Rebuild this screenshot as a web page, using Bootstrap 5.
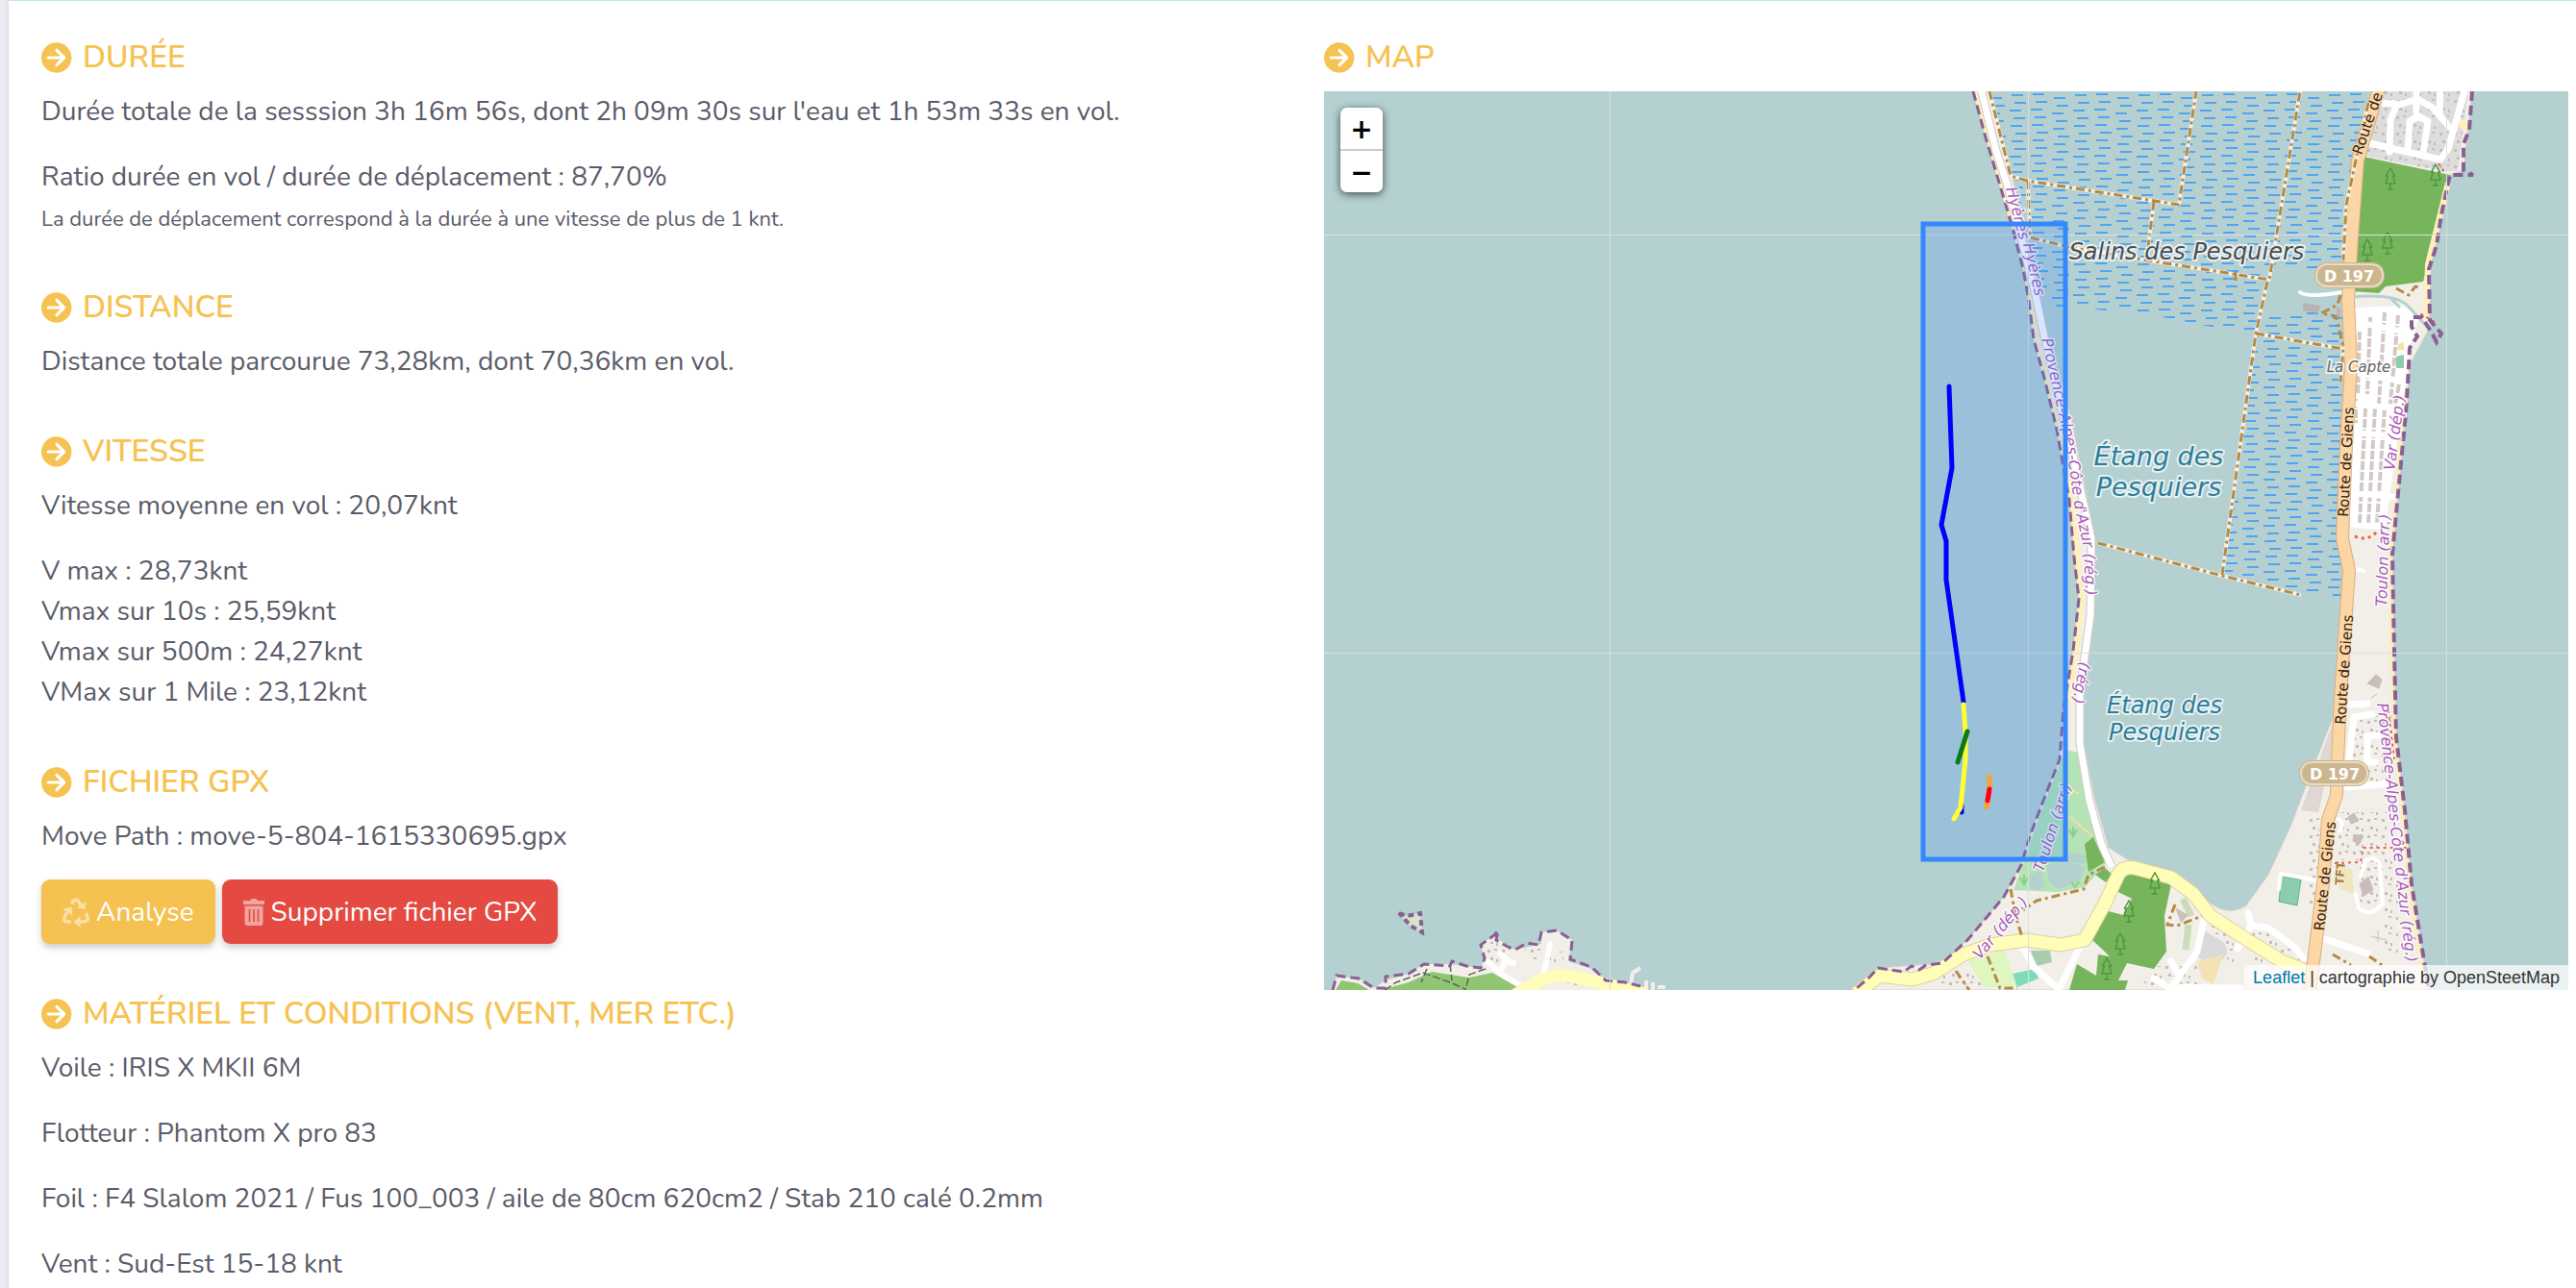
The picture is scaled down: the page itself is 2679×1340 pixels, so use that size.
<!DOCTYPE html>
<html lang="fr">
<head>
<meta charset="utf-8">
<meta name="viewport" content="width=device-width, initial-scale=1">
<title>Session</title>
<link href="https://cdn.jsdelivr.net/npm/bootstrap@5.3.0/dist/css/bootstrap.min.css" rel="stylesheet">
<style>
  body { font-family: Nunito, Lato, "Open Sans", sans-serif; font-size: 28px; line-height: 42px; color: #5a5c69; background: #ecedf2; overflow-x: hidden; }
  .session-panel { margin-left: 9px; padding: 39px 8px 0 34px; border-top: 1px solid #c3e9eb; background: #fff; box-shadow: 0 0 5px rgba(58,59,69,.2); min-height: 100vh; overflow: hidden; }
  .session-row { --bs-gutter-x: 40px; }
  .session-panel h2 { display: flex; align-items: center; gap: 11px; font-size: 32px; line-height: 40px; font-weight: 600; color: #f6c251; margin: 0 0 15px; text-transform: uppercase; }
  .session-panel h2 svg { width: 32px; height: 32px; flex: none; }
  .session-panel section { margin-bottom: 53px; }
  .session-panel p { margin-bottom: 26px; }
  .session-panel .file-path { margin-bottom: 24px; }
  .session-panel p:last-child { margin-bottom: 0; }
  .note { font-size: 22px; line-height: 22px; }
  .action-row { gap: 7px; }
  .action { --bs-btn-color: #fff; --bs-btn-hover-color: #fff; --bs-btn-font-size: 28px; --bs-btn-line-height: 42px; --bs-btn-padding-x: 22px; --bs-btn-padding-y: 12px; --bs-btn-border-radius: 9px; --bs-btn-border-width: 0; height: 67px; gap: 7px; box-shadow: 0 4px 7px rgba(0,0,0,.2); }
  .action svg { height: 32px; opacity: .5; flex: none; }
  .action-analyse { --bs-btn-bg: #f5c251; --bs-btn-hover-bg: #e9b541; }
  .action-delete { --bs-btn-bg: #e44a42; --bs-btn-hover-bg: #d33d35; }
  .map-frame { position: relative; background: #b5d0d0; font-family: "Liberation Sans", Arial, sans-serif; }
  .map-frame > svg { display: block; width: 100%; height: auto; }
  .map-zoom { position: absolute; top: 17px; left: 17px; width: 44px; border-radius: 7px; box-shadow: 0 2px 8px rgba(0,0,0,.65); overflow: hidden; }
  .map-zoom button { width: 44px; height: 43px; border: 0; background: #fff; color: #000; font: bold 28px/45px "DejaVu Sans", sans-serif; padding: 0; display: block; }
  .map-zoom button + button { border-top: 2px solid #ccc; height: 45px; }
  .map-credit { position: absolute; right: 0; bottom: 0; background: rgba(255,255,255,.7); color: #333; font-size: 18px; line-height: 26px; padding: 0 9px; }
  .map-credit a { color: #0078a8; text-decoration: none; }
  .lbl { font-family: "DejaVu Sans", sans-serif; paint-order: stroke; stroke: rgba(255,255,255,.7); stroke-width: 4px; stroke-linejoin: round; }
  .water { fill: #2b7e9c; font-style: italic; text-anchor: middle; }
  .admin { fill: #a95bbb; font-style: italic; font-size: 16px; stroke-width: 3px; }
  .street { fill: #2e2418; font-size: 15px; stroke: #fcd6a4; stroke-width: 2px; text-anchor: middle; }
</style>
<script src="https://cdn.jsdelivr.net/npm/bootstrap@5.3.0/dist/js/bootstrap.bundle.min.js"></script>
</head>
<body>
<svg width="0" height="0" class="position-absolute" aria-hidden="true">
  <symbol id="arrow" viewBox="0 0 32 32"><circle cx="15.700" cy="16" r="15.700" fill="#f6c251"/><path d="M7.300 16H23.500M16 8.300L23.700 16l-7.700 7.700" fill="none" stroke="#fff" stroke-width="3.200" stroke-linecap="round" stroke-linejoin="round"/></symbol>
</svg>
<main class="session-panel">
  <div class="row session-row">
    <div class="col-6">
      <section>
        <h2><svg aria-hidden="true"><use href="#arrow"/></svg>Durée</h2>
        <p>Durée totale de la sesssion 3h 16m 56s, dont 2h 09m 30s sur l'eau et 1h 53m 33s en vol.</p>
        <p>Ratio durée en vol / durée de déplacement : 87,70%<br><span class="note">La durée de déplacement correspond à la durée à une vitesse de plus de 1 knt.</span></p>
      </section>
      <section>
        <h2><svg aria-hidden="true"><use href="#arrow"/></svg>Distance</h2>
        <p>Distance totale parcourue 73,28km, dont 70,36km en vol.</p>
      </section>
      <section>
        <h2><svg aria-hidden="true"><use href="#arrow"/></svg>Vitesse</h2>
        <p>Vitesse moyenne en vol : 20,07knt</p>
        <p>V max : 28,73knt<br>Vmax sur 10s : 25,59knt<br>Vmax sur 500m : 24,27knt<br>VMax sur 1 Mile : 23,12knt</p>
      </section>
      <section>
        <h2><svg aria-hidden="true"><use href="#arrow"/></svg>Fichier GPX</h2>
        <p class="file-path">Move Path : move-5-804-1615330695.gpx</p>
        <div class="d-flex action-row">
          <button type="button" class="btn action action-analyse d-flex align-items-center">
            <svg viewBox="0 0 28 32" width="28" fill="none" stroke="#fff" stroke-width="3.400" aria-hidden="true"><path d="M9.500 7.500C12 2 15.500 2 18 7l2 3.500"/><path d="M15 11.500l8.500 1.500.7-8z" fill="#fff" stroke="none"/><path d="M24 17c4 6 3 9-3 9h-3"/><path d="M18.500 20v12L11.500 26z" fill="#fff" stroke="none"/><path d="M9 26H6c-5 0-5.500-3-2.500-7.500l2-3.500"/><path d="M0 12.500l9.500-2 .8 9z" fill="#fff" stroke="none"/></svg>Analyse</button>
          <button type="button" class="btn action action-delete d-flex align-items-center">
            <svg viewBox="0 0 22 32" width="22" aria-hidden="true"><path d="M0 4h7l1.500-2h5L15 4h7v4H0zM1.500 9.500h19V27q0 3-3 3h-13q-3 0-3-3z" fill="#fff"/><path d="M6.500 13v13M11 13v13M15.500 13v13" stroke="#e44a42" stroke-width="1.600"/></svg>Supprimer fichier GPX</button>
        </div>
      </section>
      <section>
        <h2><svg aria-hidden="true"><use href="#arrow"/></svg>Matériel et conditions (vent, mer etc.)</h2>
        <p>Voile : IRIS X MKII 6M</p>
        <p>Flotteur : Phantom X pro 83</p>
        <p>Foil : F4 Slalom 2021 / Fus 100_003 / aile de 80cm 620cm2 / Stab 210 calé 0.2mm</p>
        <p>Vent : Sud-Est 15-18 knt</p>
      </section>
    </div>
    <div class="col-6">
      <h2><svg aria-hidden="true"><use href="#arrow"/></svg>Map</h2>
      <div class="map-frame">
        <svg viewBox="1377 95 1294 935" role="img" aria-label="Carte de la session">
          <defs>
            <pattern id="marsh" width="66" height="48" patternUnits="userSpaceOnUse">
              <path d="M2 2h12M5 10h12M0 18h12M4 26h12M1 34h12M6 42h12M24 6h12M27 14h12M22 22h12M26 30h12M23 38h12M28 46h12M46 3h12M49 11h12M44 19h12M48 27h12M45 35h12M50 43h12" stroke="#4fa5f2" stroke-width="2"/>
            </pattern>
            <pattern id="houses" width="15" height="17" patternUnits="userSpaceOnUse">
              <path d="M2 2h3v3H2zM9 1h3v2H9zM5 10h3v3H5zM11 12h2v3h-2z" fill="#c9bcba"/>
            </pattern>
            <symbol id="tree" viewBox="0 0 12 24"><path d="M6 1L1.500 9h1.800L1 17h10L8.700 9h1.800zM6 17v6M3 23h6" fill="none" stroke="#4f9640" stroke-width="1.500"/></symbol>
            <path id="shoreW" d="M2052 95L2065 143L2080 193L2093 237L2104 280L2110 313L2115 353L2126 393L2139 447L2152 520L2157 580L2162 623L2156 677L2146 737L2142 790L2125 833L2111 870L2102 900L2084 933L2047 977L2020 1002L2003 1004L1996 1009L1988 1005L1980 1011L1953 1007L1943 1018L1927 1031"/>
            <path id="shoreE" d="M2571 95L2568 135L2562 150L2562 177L2572 182L2548 182L2539 223L2534 255L2526 280L2527 333L2539 347L2534 356L2530 348L2519 330L2508 330L2508 340L2514 350L2506 362L2504 400L2502 430L2494 513L2488 577L2490 677L2492 767L2501 843L2508 920L2526 1030"/>
            <path id="regW" d="M2123 353L2134 400L2149 465L2158 530L2167 570L2171 660"/>
            <path id="regE" d="M2472 732L2480 800L2486 860L2494 930L2509 1050"/>
          </defs>
          <rect x="1377" y="95" width="1294" height="935" fill="#b5d0d0"/>

          <!-- salt marsh -->
          <path d="M2069 95H2463L2445 180L2437 300L2436 380L2435 577L2434 622L2393 618L2311 598L2316 560L2344 347L2300 340L2240 328L2180 322L2130 318L2112 250L2093 186z" fill="url(#marsh)"/>
          <path d="M2366 275L2436 285V325L2400 322L2352 325z" fill="#b5d0d0"/>

          <!-- land -->
          <path d="M2052 95L2065 143L2080 193L2093 237L2104 280L2110 313L2115 353L2126 393L2139 447L2152 520L2157 580L2162 623L2156 677L2146 737L2142 790L2125 833L2111 870L2102 900L2084 933L2047 977L2020 1002L1953 1007L1927 1030H2526L2508 920L2501 843L2492 767L2490 677L2488 577L2494 513L2502 430L2506 380L2527 340L2526 280L2539 223L2548 182L2562 177L2571 95H2470L2450 167L2445 247L2441 313L2444 380L2438 463L2435 577L2440 637L2430 703L2426 747L2400 813L2382 860L2359 910L2336 942Q2325 950 2310 946L2299 940L2281 925L2258 908L2217 897L2193 882L2179 833L2167 773L2167 720L2178 640L2179 560L2155 440L2128 345L2108 250L2093 186L2069 95z" fill="#f2efe9" stroke="#d5d0c8"/>
          <path d="M2474 95L2459 162L2541 178L2556 178L2567 95z" fill="#dedddd"/>
          <path d="M2474 95L2459 162L2541 178L2556 178L2567 95z" fill="url(#houses)"/>
          <path d="M2458 163L2548 182L2539 223L2520 293L2481 298L2474 305L2447 303z" fill="#77b55c"/>
          <path d="M2055 95L2107 280L2118 353L2142 447L2155 520L2161 580L2165 623L2159 677L2149 737M2546 190L2525 275L2523 330" fill="none" stroke="#fdf0bd" stroke-width="6"/>
          <path d="M2558 124l10 2v10l-11-3z" fill="#fbeebf"/>
          <path d="M2500 410L2493 500L2486 577L2487 690L2490 767L2499 850L2506 930L2520 1020" fill="none" stroke="#fbeebf" stroke-width="4"/>
          <path d="M2426 752L2414 785L2393 843L2411 845L2424 790z" fill="#e0d6d3"/>
          <path d="M2398 850h14v95h-14zM2430 845h52v50h-52zM2454 895h24v50h-24zM2480 895h14v100h-14zM2340 960L2400 995V1004H2345zM2290 950L2325 970L2330 1004H2320z" fill="url(#houses)"/>
          <path d="M2448 745h42v68h-46zM2020 1010h75v20h-80zM2240 1005h45v25h-60z" fill="url(#houses)"/>
          <path d="M2292 968L2312 980Q2322 992 2308 1000Q2296 1006 2286 995z" fill="#dadada"/>
          <path d="M2285 1000L2312 993L2302 1024L2290 1018z" fill="#f2e2b4"/>
          <path d="M2432 900l14 4 2 26-16-6z" fill="#f2e6bd"/>

          <!-- wood and grass -->
          <path d="M2148 780L2162 783L2173 833L2189 882L2189 900L2168 923L2140 928L2094 926L2104 898L2125 838z" fill="#b5e3b5"/>
          <path d="M2111 910l12-4 4 14-6 6-10-2zM2128 900l18-3 22 4-4 14-22 10-10-6zM2145 890q12-6 24 0v8h-20z" fill="#b5d0d0"/>
          <path d="M2168 878L2177 871L2189 897L2172 907zM2179 910L2189 903L2196 909L2190 918z" fill="#77b55c"/>
          <path d="M2203 910L2217 908L2258 920L2251 953L2253 990L2240 1008L2212 1002L2203 1020H2213L2210 1030H2152L2160 1003L2180 1015L2182 993L2194 995L2175 977L2189 947L2208 952L2217 935L2201 927z" fill="#77b55c"/>
          <path d="M2047 1000L2084 988L2098 1027H2063z" fill="#dff6be"/>
          <path d="M2373 912L2393 915L2389 942L2370 938z" fill="#8bcdad" stroke="#6aae8c"/>
          <path d="M2093 1013L2117 1008L2120 1018L2098 1027z" fill="#7ddcb9"/>
          <path d="M2112 989h20l2 12-16 4z" fill="#a6cdb0"/>
          <path d="M2270 935L2279 953M2276 962L2273 988" stroke="#cbdcb8" stroke-width="7"/>
          <path d="M2152 820L2162 826M2152 850L2160 856L2176 870" fill="none" stroke="#f5dca8" stroke-width="2"/>
          <path d="M2262 944l14 8-8 8z" fill="#cabfbd"/>

          <!-- camp site -->
          <path d="M2449 320L2500 318L2515 332L2506 362L2503 390L2480 552L2443 548z" fill="#fff"/>
          <g fill="none" stroke="#d2c9c7" stroke-width="4" stroke-dasharray="9 2">
            <path d="M2454 345L2452 410M2450 415V440M2465 330L2462 410M2460 425L2454 545M2480 325L2474 420M2470 425L2463 545M2494 328L2486 420M2480 425L2472 545M2495 400L2490 425"/>
          </g>
          <path d="M2450 335l60 12M2450 388l54 10M2449 420l52 6M2447 450l50 4M2444 513l48 4" stroke="#fff" stroke-width="6"/>
          <path d="M2449 558q14 6 24-6" fill="none" stroke="#f25c54" stroke-width="3" stroke-dasharray="3 4"/>
          <path d="M2492 371l8-2v14h-8z" fill="#8bcdad"/>
          <path d="M2494 358l6-2v8h-7z" fill="#f2e2a8"/>
          <path d="M2395 315l18 3-2 8-16-3zM2430 318l4 4v8h-4z" fill="#b9b3b1"/>
          <path d="M2462 711l9-9 6 5-3 9zM2466 726l6-4M2442 850l6-4 5 8-8 3zM2448 868l10 2-4 8-7-3zM2454 920l9-8 5 14-10 6zM2466 974l16 4M2473 968v12" fill="#c9bcba" stroke="#c9bcba"/>

          <!-- minor roads -->
          <path d="M2060 92L2076 157L2089 197L2117 307L2126 350L2143 423L2155 470L2175 560L2174 640L2163 720L2163 773L2173 833L2185 877L2196 902" fill="none" stroke="#cfcac6" stroke-width="9"/>
          <path d="M2060 92L2076 157L2089 197L2117 307L2126 350L2143 423L2155 470L2175 560L2174 640L2163 720L2163 773L2173 833L2185 877L2196 902" fill="none" stroke="#fff" stroke-width="7"/>
          <g fill="none" stroke="#fff" stroke-width="7" stroke-linejoin="round" stroke-linecap="round">
            <path d="M2464 149L2538 166L2546 155L2563 95M2485 158L2486 125L2492 110L2514 103L2530 112L2547 132M2474 107L2492 108M2513 95V120L2525 126L2520 160M2514 122L2506 126L2504 158M2538 95L2537 118"/>
            <path d="M2392 304Q2400 310 2436 304" stroke-width="4"/>
            <path d="M2102 983L2116 1007L2139 1027M2164 983L2141 1030M2292 957L2285 990L2258 1027L2330 1028M2338 950L2341 963L2358 965L2386 985L2396 998M2341 963L2327 987M2418 977L2462 992M2240 1018L2260 1030M2258 1000L2264 1012"/>
            <path d="M2462 732L2444 733M2467 743L2448 746L2443 790M2474 765L2462 766V793H2470M2441 819L2487 815"/>
            <path d="M2455 912L2460 895Q2472 890 2475 900L2478 940Q2466 955 2453 945L2450 930M2370 925L2372 909L2410 916M2450 592l8 2M2432 852q6 4 2 12" stroke-width="4"/>
          </g>

          <!-- main roads -->
          <g fill="none" stroke-linejoin="round">
            <path d="M1930 1034L1955 1015L1988 1019L2010 1013L2042 993L2070 983L2107 978L2143 983L2168 978L2189 940L2203 910Q2208 901 2220 903L2258 913L2281 930L2299 953L2336 977L2373 1000L2398 1010" stroke="#d9d3a0" stroke-width="15"/>
            <path d="M1930 1034L1955 1015L1988 1019L2010 1013L2042 993L2070 983L2107 978L2143 983L2168 978L2189 940L2203 910Q2208 901 2220 903L2258 913L2281 930L2299 953L2336 977L2373 1000L2398 1010" stroke="#fffdb8" stroke-width="13"/>
            <path d="M2474 92L2452 167L2446 247L2442 313L2445 380L2440 463L2436 560L2443 593L2440 637L2434 727L2431 793L2430 827L2421 853L2416 920L2407 993L2402 1030" stroke="#d9ab80" stroke-width="14"/>
            <path d="M2474 92L2452 167L2446 247L2442 313L2445 380L2440 463L2436 560L2443 593L2440 637L2434 727L2431 793L2430 827L2421 853L2416 920L2407 993L2402 1030" stroke="#fcd6a4" stroke-width="12"/>
          </g>

          <!-- tracks -->
          <path d="M2069 95L2091 183L2108 188L2266 213L2284 95M2109 188L2111 247L2152 257L2234 271L2360 291L2392 95M2240 210L2234 257M2358 293L2346 347L2311 598M2346 347L2437 363L2434 397M2182 565L2311 599L2393 619M2463 107L2440 213L2437 270" fill="none" stroke="#f4f0e8" stroke-width="4" stroke-linejoin="round"/>
          <g fill="none" stroke="#b38b45" stroke-width="3" stroke-dasharray="9 4 3 4" stroke-linejoin="round"><path d="M2069 95L2091 183L2108 188L2266 213L2284 95M2109 188L2111 247L2152 257L2234 271L2360 291L2392 95M2240 210L2234 257M2325 283v10M2358 293L2346 347L2311 598M2346 347L2437 363L2434 397M2182 565L2311 599L2393 619M2463 107L2440 213L2437 270M2434 307L2431 317L2414 326L2429 329L2437 360"/>
            <path d="M2492 300L2505 307L2512 298L2518 300M2189 902L2172 910L2167 925L2118 937L2104 947M2091 925L2096 952L2103 975M2262 941L2254 962L2264 963L2290 953M2034 1010L2048 1030M2067 995L2080 1028L2098 1028M2426 993L2445 1004M2464 995L2480 1006"/></g>
          <path d="M2428 898L2455 897L2458 882H2506M2532 335L2515 325M2536 170L2544 182M2483 732L2490 790" fill="none" stroke="#f25c54" stroke-width="2" stroke-dasharray="3 4"/>
          <path d="M2448 309Q2490 305 2504 318L2524 340M2486 310L2496 320" fill="none" stroke="#b5d0d0" stroke-width="3"/>

          <!-- south-west headland -->
          <path d="M1386 1030L1390 1015L1413 1018L1429 1028L1441 1020L1465 1013L1481 1003L1508 1003L1540 1007L1544 997L1540 983L1554 973L1568 985L1576 988L1603 982L1603 970L1619 968L1635 978L1631 1000L1655 1008L1670 1020L1706 1030z" fill="#f2efe9"/>
          <path d="M1546 980h24v22h-24zM1586 986h16v12h-16zM1612 990h14v12h-14zM1630 1018h60v12h-60z" fill="url(#houses)"/>
          <path d="M1389 1030L1395 1020L1412 1023L1424 1030zM1436 1030L1465 1022L1489 1011L1528 1017L1552 1012L1584 1030z" fill="#8fc573"/>
          <path d="M1548 1001L1562 1014L1584 1027M1562 1008L1566 997L1560 992M1566 1000l8 2M1612 982L1605 1016" fill="none" stroke="#fff" stroke-width="6" stroke-linecap="round"/>
          <path d="M1696 1024L1698 1012L1706 1007M1712 1030V1020M1719 1031V1022M1724 1027h8" fill="none" stroke="#f2efe9" stroke-width="4"/>
          <path d="M1574 1036L1604 1019Q1622 1012 1640 1017L1667 1023L1710 1034" fill="none" stroke="#fffdb8" stroke-width="13"/>
          <path d="M1440 1030L1452 1022L1480 1012L1508 1022L1524 1029M1484 1008L1478 1022M1508 1003L1510 1020M1545 1008L1528 1014L1524 1030" fill="none" stroke="#5d6655" stroke-width="1.500" stroke-dasharray="8 3"/>
          <path d="M1455 950L1463 953L1477 950L1479 970L1467 963z" fill="#d9e4cd"/>
          <g fill="none" stroke="#8c5f94" stroke-width="4" stroke-dasharray="10 5">
            <path d="M1386 1030L1390 1015L1413 1018L1429 1028L1441 1028V1016L1465 1013L1481 1003L1508 1005L1510 1000L1525 1005L1540 1007L1544 997L1540 983L1554 973L1558 968L1556 978L1568 985L1576 988L1588 981L1600 983L1603 970L1619 968L1635 978L1633 998L1655 1006L1670 1020L1690 1022L1706 1026" stroke-width="3"/>
            <path d="M1455 950L1463 953L1477 950L1479 970L1467 963z" stroke-dasharray="6 4"/>
            <use href="#shoreW" stroke-width="3"/>
            <use href="#shoreE"/>
          </g>

          <!-- trees -->
          <g><use href="#tree" x="2480" y="174" width="12" height="24"/><use href="#tree" x="2527" y="170" width="12" height="24"/><use href="#tree" x="2477" y="241" width="12" height="24"/><use href="#tree" x="2456" y="248" width="12" height="24"/><use href="#tree" x="2235" y="907" width="12" height="24"/><use href="#tree" x="2208" y="936" width="12" height="24"/><use href="#tree" x="2199" y="970" width="12" height="24"/><use href="#tree" x="2185" y="996" width="12" height="24"/></g>
          <path d="M2152 863l4 7 4-7M2156 860v11M2101 913l4 7 4-7M2105 910v11M2154 917l4 6 4-6" fill="none" stroke="#8bcf8b" stroke-width="2"/>

          <!-- tile seams -->
          <path d="M1674.500 95V1030M2109.500 95V1030M2544.500 95V1030M1377 244.500H2671M1377 679.500H2671" stroke="#d9dfe0" stroke-width="1"/>

          <!-- place names -->
          <g class="lbl water" font-size="27"><text x="2245" y="484">Étang des</text><text x="2245" y="516">Pesquiers</text></g>
          <g class="lbl water" font-size="24"><text x="2251" y="742">Étang des</text><text x="2251" y="770">Pesquiers</text></g>
          <text class="lbl" x="2274" y="270" font-size="24" font-style="italic" text-anchor="middle" fill="#4d4d4d">Salins des Pesquiers</text>
          <text class="lbl" x="2453" y="387" font-size="15" font-style="italic" text-anchor="middle" fill="#666">La Capte</text>
          <text class="lbl street" transform="translate(2467 130) rotate(-71)">Route de</text>
          <text class="lbl street" transform="translate(2445 481) rotate(-87)">Route de Giens</text>
          <text class="lbl street" transform="translate(2443 697) rotate(-86)">Route de Giens</text>
          <text class="lbl street" transform="translate(2423 912) rotate(-84)">Route de Giens</text>
          <g class="lbl admin">
            <text transform="translate(2086 196) rotate(75)">Hyères</text>
            <text transform="translate(2104 254) rotate(77)">Hyères</text>
            <text><textPath href="#regW">Provence-Alpes-Côte d'Azur (rég.)</textPath></text>
            <text transform="translate(2163 688) rotate(100)">(rég.)</text>
            <text transform="translate(2125 908) rotate(-72)">Toulon (arr.)</text>
            <text transform="translate(2059 999) rotate(-50)">Var (dép.)</text>
            <text transform="translate(2490 490) rotate(-82)">Var (dép.)</text>
            <text transform="translate(2482 631) rotate(-88)">Toulon (arr.)</text>
            <text><textPath href="#regE">Provence-Alpes-Côte d'Azur (rég.)</textPath></text>
          </g>
          <text x="2437" y="921" transform="rotate(-86 2437 921)" font-family="DejaVu Sans, sans-serif" font-weight="700" font-size="12" fill="#a97f3c">TFT</text>
          <g font-family="DejaVu Sans, sans-serif" font-weight="700" font-size="16" fill="#fff" text-anchor="middle">
            <rect x="2407" y="273" width="73" height="27" rx="13" fill="#cbb68f"/><rect x="2409" y="275" width="69" height="23" rx="11" fill="none" stroke="#e9dcc0" stroke-width="2"/><text x="2443" y="293">D 197</text>
            <rect x="2391" y="791" width="73" height="27" rx="13" fill="#cbb68f"/><rect x="2393" y="793" width="69" height="23" rx="11" fill="none" stroke="#e9dcc0" stroke-width="2"/><text x="2428" y="811">D 197</text>
          </g>

          <!-- GPS session -->
          <rect x="2000" y="233" width="148" height="661" fill="#38f" fill-opacity=".2" stroke="#38f" stroke-width="5"/>
          <g fill="none" stroke-width="5" stroke-linecap="round" stroke-linejoin="round">
            <path d="M2027 402L2030 487L2019 546L2024 563V603L2042 730M2040 838V845" stroke="#00f"/>
            <path d="M2042 733L2044 762L2044 790L2039 840L2032 852" stroke="#ff3"/>
            <path d="M2046 761L2036 793" stroke="#0b7a1c"/>
            <path d="M2069 808V820L2066 840" stroke="#ffa02e"/>
            <path d="M2069 821L2067 833" stroke="#f01"/>
          </g>
        </svg>
        <div class="map-zoom">
          <button type="button" aria-label="Zoom avant">+</button>
          <button type="button" aria-label="Zoom arrière">−</button>
        </div>
        <div class="map-credit"><a href="#">Leaflet</a> | cartographie by OpenSteetMap</div>
      </div>
    </div>
  </div>
</main>
</body>
</html>
